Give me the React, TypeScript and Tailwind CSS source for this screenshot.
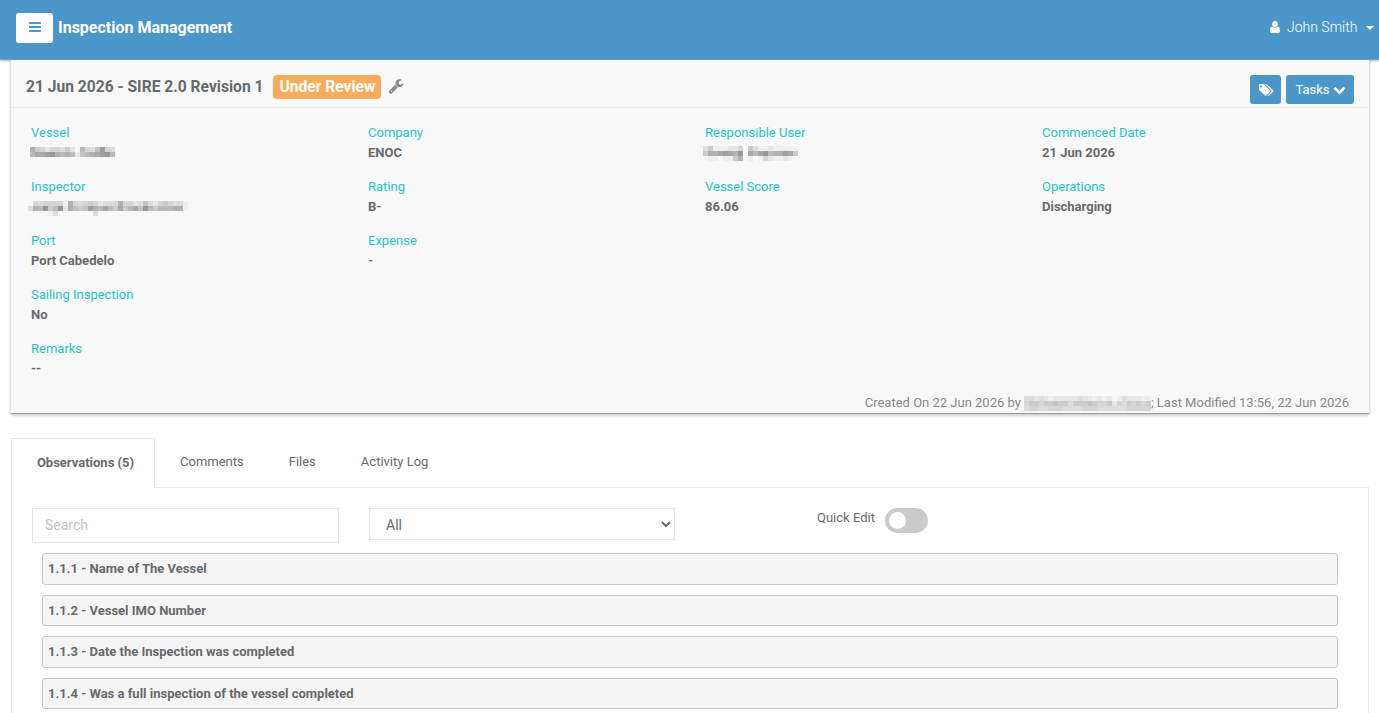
import { useState } from "react";

const details = [
  [
    { label: "Vessel", mask: "vessel" },
    { label: "Inspector", mask: "inspector" },
    { label: "Port", value: "Port Cabedelo" },
    { label: "Sailing Inspection", value: "No" },
    { label: "Remarks", value: "--" },
  ],
  [
    { label: "Company", value: "ENOC" },
    { label: "Rating", value: "B-" },
    { label: "Expense", value: "-" },
  ],
  [
    { label: "Responsible User", mask: "user" },
    { label: "Vessel Score", value: "86.06" },
  ],
  [
    { label: "Commenced Date", value: "21 Jun 2026" },
    { label: "Operations", value: "Discharging" },
  ],
];

const observations = [
  "1.1.1 - Name of The Vessel",
  "1.1.2 - Vessel IMO Number",
  "1.1.3 - Date the Inspection was completed",
  "1.1.4 - Was a full inspection of the vessel completed",
];

const tabs = ["Comments", "Files", "Activity Log"];

// one hex digit per 5px block, 0 = clear, f = darkest
const masks: Record<string, string[]> = {
  vessel: ["85424435207436a43", "799ab878726789ab7"],
  inspector: ["04344441843454233484423632454331", "387b57b28656a8797595796b75777881", "00001300000003000000000000000000"],
  user: ["3511122405311211111", "5889a98b0979b788a95", "0110115801014211210"],
  footer: ["33232122222322121201322211", "45545565535556544524354545", "34433444333344433333344444"],
};

const maskOffsets: Record<string, string> = {
  vessel: "-ml-px mt-1",
  inspector: "-ml-[3px] mt-1",
  user: "-ml-0.5 mt-[3px]",
};

function Mask({ name, className }: { name: string; className?: string }) {
  const rows = masks[name];
  const w = rows[0].length * 5;
  const h = rows.length * 5;
  return (
    <svg width={w} height={h} viewBox={`0 0 ${w} ${h}`} shapeRendering="crispEdges" className={className} aria-hidden>
      {rows.map((row, y) =>
        [...row].map((c, x) => (
          <rect key={`${x}-${y}`} x={x * 5} y={y * 5} width={5} height={5} fill="#6a6a6f" fillOpacity={parseInt(c, 16) / 16} />
        ))
      )}
    </svg>
  );
}

function Icon({ d, w = 1792, className }: { d: string; w?: number; className?: string }) {
  return (
    <svg viewBox={`0 0 ${w} 1792`} fill="currentColor" className={className} aria-hidden>
      <path d={d} />
    </svg>
  );
}

const icons = {
  bars: "M1664 1344v128q0 26-19 45t-45 19h-1408q-26 0-45-19t-19-45v-128q0-26 19-45t45-19h1408q26 0 45 19t19 45zm0-512v128q0 26-19 45t-45 19h-1408q-26 0-45-19t-19-45v-128q0-26 19-45t45-19h1408q26 0 45 19t19 45zm0-512v128q0 26-19 45t-45 19h-1408q-26 0-45-19t-19-45v-128q0-26 19-45t45-19h1408q26 0 45 19t19 45z",
  user: "M1536 1399q0 109-62.5 187t-150.5 78h-854q-88 0-150.5-78t-62.5-187q0-85 8.5-160.5t31.5-152 58.5-131 94-89 134.5-34.5q131 128 313 128t313-128q76 0 134.5 34.5t94 89 58.5 131 31.5 152 8.5 160.5zm-256-887q0 159-112.5 271.5t-271.5 112.5-271.5-112.5-112.5-271.5 112.5-271.5 271.5-112.5 271.5 112.5 112.5 271.5z",
  tags: "M384 448q0-53-37.5-90.5t-90.5-37.5-90.5 37.5-37.5 90.5 37.5 90.5 90.5 37.5 90.5-37.5 37.5-90.5zm1067 576q0 53-37 90l-491 492q-39 37-91 37-53 0-90-37l-715-716q-38-37-64.5-101t-26.5-117v-416q0-52 38-90t90-38h416q53 0 117 26.5t102 64.5l715 714q37 39 37 91zm384 0q0 53-37 90l-491 492q-39 37-91 37-36 0-59-14t-53-45l470-470q37-37 37-90 0-52-37-91l-715-714q-38-38-102-64.5t-117-26.5h224q53 0 117 26.5t102 64.5l715 714q37 39 37 91z",
  wrench: "M448 1472q0-26-19-45t-45-19-45 19-19 45 19 45 45 19 45-19 19-45zm644-420l-682 682q-37 37-90 37-52 0-91-37l-106-108q-38-36-38-90 0-53 38-91l681-681q39 98 114.5 173.5t173.5 114.5zm634-435q0 39-23 106-47 134-164.5 217.5t-258.5 83.5q-185 0-316.5-131.5t-131.5-316.5 131.5-316.5 316.5-131.5q58 0 121.5 16.5t107.5 46.5q16 11 16 28t-16 28l-293 169v224l193 107q5-3 79-48.5t135.5-81 70.5-35.5q15 0 23.5 10t8.5 25z",
  chevron: "M1683 808l-742 741q-19 19-45 19t-45-19l-742-741q-19-19-19-45.5t19-45.5l166-165q19-19 45-19t45 19l531 531 531-531q19-19 45-19t45 19l166 165q19 19 19 45.5t-19 45.5z",
};

export default function App() {
  const [quickEdit, setQuickEdit] = useState(false);

  return (
    <div className="h-[713px] overflow-hidden bg-white font-[Roboto,sans-serif] text-[13px] leading-5 text-[#676a6c]">
      <header className="flex h-[60px] items-start justify-between border-b border-[#7f9cb2] bg-[#4b97c9] pl-4 pr-[5px] text-white shadow-[0_1px_2px_rgba(0,0,0,0.3)]">
        <div className="flex items-center pt-[13px]">
          <button className="flex h-[30px] w-[37px] items-center justify-center rounded-[3px] bg-white pb-0.5 text-[#4b97c9]" aria-label="Menu">
            <Icon d={icons.bars} className="h-[14px] w-[14px]" />
          </button>
          <h1 className="ml-[5px] text-base font-bold">Inspection Management</h1>
        </div>
        <div className="flex items-center pt-[17px] text-sm font-light">
          <Icon d={icons.user} className="mr-[5px] h-[14px] w-[14px]" />
          <span>John Smith</span>
          <span className="ml-[8.6px] mt-px border-x-4 border-t-4 border-x-transparent border-t-white" />
        </div>
      </header>

      <section className="ml-[11px] mr-[10px] h-[354px] border-b border-[#a0a0a0] bg-[#f8f8f8] shadow-[0_1px_3px_rgba(0,0,0,0.3)]">
        <div className="flex h-12 items-start border-b border-[#e7eaec] px-[15px]">
          <h2 className="mt-[17px] text-[15.6px] font-bold">21 Jun 2026 - SIRE 2.0 Revision 1</h2>
          <span className="ml-[10px] mt-[15px] flex h-6 items-center rounded bg-[#f8ac59] px-[6px] text-[15.6px] font-bold text-white">Under Review</span>
          <Icon d={icons.wrench} className="ml-[7px] mt-[18px] h-4 w-4 text-[#888888]" />
          <div className="ml-auto mt-[15px] flex gap-[5px] text-white">
            <button className="flex h-[29px] w-[31px] items-center justify-center rounded-[3px] bg-[#4b97c9] pl-px" aria-label="Tags">
              <Icon d={icons.tags} w={1920} className="h-[14px] w-[15px]" />
            </button>
            <button className="flex h-[29px] w-[68px] items-center justify-center gap-[3px] rounded-[3px] bg-[#4b97c9] pl-px">
              Tasks
              <Icon d={icons.chevron} className="h-[13px] w-[13px]" />
            </button>
          </div>
        </div>
        <div className="grid h-[285px] grid-cols-[337px_337px_337px_1fr] pl-5 pt-[15px]">
          {details.map((col, i) => (
            <dl key={i}>
              {col.map((f) => (
                <div key={f.label} className="h-[54px]">
                  <dt className="text-[#23c6c8]">{f.label}</dt>
                  <dd className="font-bold">
                    {f.mask ? <Mask name={f.mask} className={maskOffsets[f.mask]} /> : f.value}
                  </dd>
                </div>
              ))}
            </dl>
          ))}
        </div>
        <p className="flex h-5 items-center justify-end pr-5 text-[#888888]">
          Created On 22 Jun 2026 by
          <Mask name="footer" className="ml-[3px] w-[127px]" />; Last Modified 13:56, 22 Jun 2026
        </p>
      </section>

      <nav className="ml-[11px] mr-[10px] mt-6 flex h-[50px]">
        <button className="w-[144px] border border-b-0 border-[#e7eaec] pb-0.5 pl-[5px] font-bold">Observations (5)</button>
        <div className="flex flex-1 items-center gap-[45px] border-b border-[#e7eaec] pb-px pl-[25px]">
          {tabs.map((t) => (
            <button key={t}>{t}</button>
          ))}
        </div>
      </nav>

      <main className="ml-[11px] mr-[10px] h-[300px] border-x border-[#e7eaec] px-5 pt-5">
        <div className="flex h-[45px] items-start">
          <input placeholder="Search" className="h-[35px] w-[307px] border border-[#e5e6e7] px-3 pb-0.5 text-sm outline-none placeholder:text-[#c4c4c4]" />
          <select className="ml-[30px] h-8 w-[306px] border border-[#e5e6e7] bg-white px-3 pt-0.5 text-sm outline-none">
            <option>All</option>
          </select>
          <span className="ml-[142px]">Quick Edit</span>
          <button
            role="switch"
            aria-checked={quickEdit}
            aria-label="Quick Edit"
            onClick={() => setQuickEdit(!quickEdit)}
            className={`ml-[10px] flex h-[25px] w-[43px] items-center rounded-full px-1 ${quickEdit ? "justify-end bg-[#4b97c9]" : "bg-[#cacaca]"}`}
          >
            <span className="h-[17px] w-[17px] rounded-full bg-white" />
          </button>
        </div>
        <ul className="mx-[10px] space-y-[10px]">
          {observations.map((o) => (
            <li key={o} className="flex h-[31.57px] items-center rounded-[3px] border border-[#c8c8c8] bg-[#f5f5f5] pl-[5px] pt-[0.5px] font-bold">
              {o}
            </li>
          ))}
        </ul>
      </main>
    </div>
  );
}
